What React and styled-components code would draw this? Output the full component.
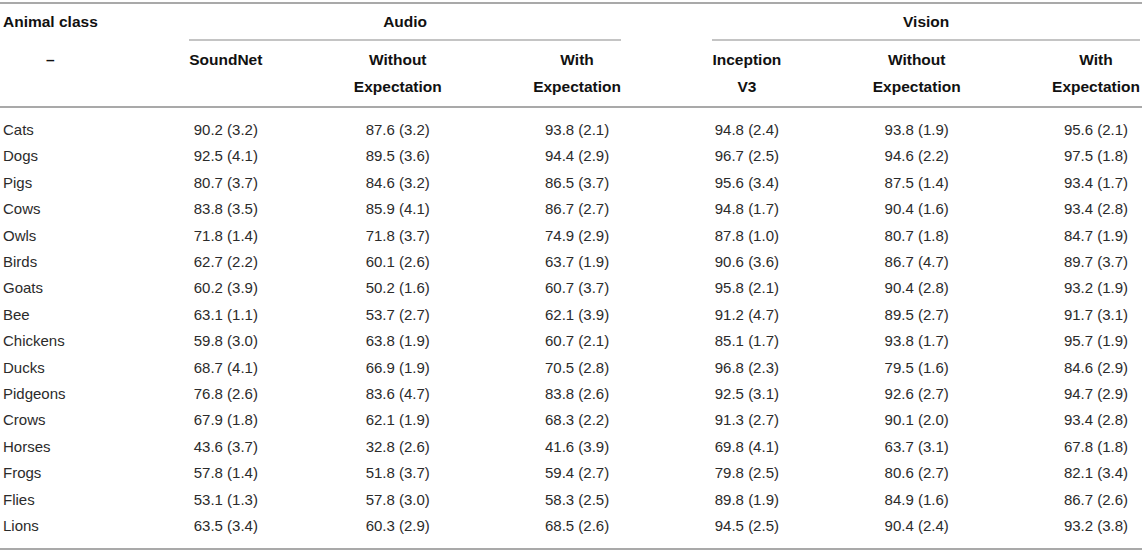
import styled, { createGlobalStyle } from "styled-components"

const GlobalStyle = createGlobalStyle`
    body {
        margin: 0;
        background: #fff;
        font-family: "Liberation Sans", Arial, sans-serif;
    }
`

const Wrapper = styled.div`
    width: 1142px;
    padding-top: 2px;
`

const Tabela = styled.div`
    display: grid;
    grid-template-columns: repeat(7, auto);
    justify-content: space-between;
    padding: 0 2px 8px 3px;
    border-top: 2px solid #a9a9a9;
    border-bottom: 2px solid #a9a9a9;
    font-size: 15px;
    color: #2b2b2b;
`

const GrupoCabecalho = styled.div`
    grid-column: ${props => props.$coluna};
    padding: 4px 0;
    border-bottom: ${props => props.$linha ? "2px solid #c4c4c4" : "2px solid transparent"};
    line-height: 27px;
    font-size: 15.5px;
    font-weight: 700;
    color: #111;
    text-align: ${props => props.$esquerda ? "left" : "center"};
`

const Cabecalho = styled.div`
    padding: 5px 0 6px;
    line-height: 27px;
    font-size: 15.5px;
    font-weight: 700;
    color: #111;
    text-align: center;
`

const Divisor = styled.div`
    grid-column: 1 / -1;
    height: 2px;
    margin: 0 -2px 9px -3px;
    background: #a9a9a9;
`

const Celula = styled.div`
    line-height: 26.4px;
    white-space: nowrap;
    text-align: ${props => props.$esquerda ? "left" : "center"};
`

const colunas = [
    ["–"],
    ["SoundNet"],
    ["Without", "Expectation"],
    ["With", "Expectation"],
    ["Inception", "V3"],
    ["Without", "Expectation"],
    ["With", "Expectation"],
]

const dados = [
    ["Cats", "90.2 (3.2)", "87.6 (3.2)", "93.8 (2.1)", "94.8 (2.4)", "93.8 (1.9)", "95.6 (2.1)"],
    ["Dogs", "92.5 (4.1)", "89.5 (3.6)", "94.4 (2.9)", "96.7 (2.5)", "94.6 (2.2)", "97.5 (1.8)"],
    ["Pigs", "80.7 (3.7)", "84.6 (3.2)", "86.5 (3.7)", "95.6 (3.4)", "87.5 (1.4)", "93.4 (1.7)"],
    ["Cows", "83.8 (3.5)", "85.9 (4.1)", "86.7 (2.7)", "94.8 (1.7)", "90.4 (1.6)", "93.4 (2.8)"],
    ["Owls", "71.8 (1.4)", "71.8 (3.7)", "74.9 (2.9)", "87.8 (1.0)", "80.7 (1.8)", "84.7 (1.9)"],
    ["Birds", "62.7 (2.2)", "60.1 (2.6)", "63.7 (1.9)", "90.6 (3.6)", "86.7 (4.7)", "89.7 (3.7)"],
    ["Goats", "60.2 (3.9)", "50.2 (1.6)", "60.7 (3.7)", "95.8 (2.1)", "90.4 (2.8)", "93.2 (1.9)"],
    ["Bee", "63.1 (1.1)", "53.7 (2.7)", "62.1 (3.9)", "91.2 (4.7)", "89.5 (2.7)", "91.7 (3.1)"],
    ["Chickens", "59.8 (3.0)", "63.8 (1.9)", "60.7 (2.1)", "85.1 (1.7)", "93.8 (1.7)", "95.7 (1.9)"],
    ["Ducks", "68.7 (4.1)", "66.9 (1.9)", "70.5 (2.8)", "96.8 (2.3)", "79.5 (1.6)", "84.6 (2.9)"],
    ["Pidgeons", "76.8 (2.6)", "83.6 (4.7)", "83.8 (2.6)", "92.5 (3.1)", "92.6 (2.7)", "94.7 (2.9)"],
    ["Crows", "67.9 (1.8)", "62.1 (1.9)", "68.3 (2.2)", "91.3 (2.7)", "90.1 (2.0)", "93.4 (2.8)"],
    ["Horses", "43.6 (3.7)", "32.8 (2.6)", "41.6 (3.9)", "69.8 (4.1)", "63.7 (3.1)", "67.8 (1.8)"],
    ["Frogs", "57.8 (1.4)", "51.8 (3.7)", "59.4 (2.7)", "79.8 (2.5)", "80.6 (2.7)", "82.1 (3.4)"],
    ["Flies", "53.1 (1.3)", "57.8 (3.0)", "58.3 (2.5)", "89.8 (1.9)", "84.9 (1.6)", "86.7 (2.6)"],
    ["Lions", "63.5 (3.4)", "60.3 (2.9)", "68.5 (2.6)", "94.5 (2.5)", "90.4 (2.4)", "93.2 (3.8)"],
]

export default function App() {
    return (
        <Wrapper>
            <GlobalStyle />
            <Tabela>
                <GrupoCabecalho $coluna="1 / 2" $esquerda>Animal class</GrupoCabecalho>
                <GrupoCabecalho $coluna="2 / 5" $linha>Audio</GrupoCabecalho>
                <GrupoCabecalho $coluna="5 / 8" $linha>Vision</GrupoCabecalho>

                {colunas.map((linhas, i) => (
                    <Cabecalho key={i}>
                        {linhas.map((texto, j) => <div key={j}>{texto}</div>)}
                    </Cabecalho>
                ))}

                <Divisor />

                {dados.map(linha => linha.map((valor, i) => (
                    <Celula key={linha[0] + i} $esquerda={i === 0}>{valor}</Celula>
                )))}
            </Tabela>
        </Wrapper>
    )
}
